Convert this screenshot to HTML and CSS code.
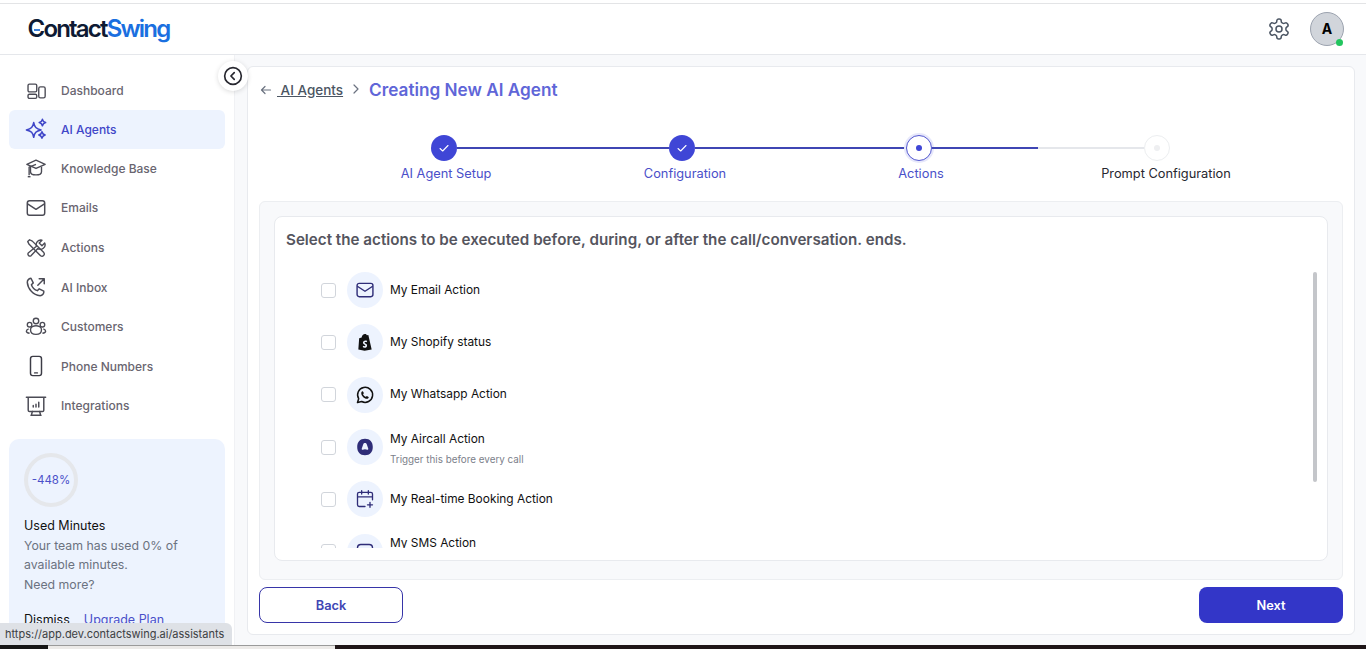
FILE: index.html
```html
<!DOCTYPE html>
<html lang="en">
<head>
<meta charset="utf-8">
<title>ContactSwing</title>
<link rel="stylesheet" href="styles.css">
</head>
<body>
<div class="app">
  <header class="topbar">
    <div class="logo"><span class="logo-dark">Contact</span><span class="logo-blue">Swing</span><i class="logo-dash"></i></div>
    <div class="top-actions">
      <svg class="gear" viewBox="0 0 24 24" fill="none" stroke="#4b5563" stroke-width="1.5" stroke-linejoin="round"><path d="M12.220 2h-.44a2 2 0 0 0-2 2v.18a2 2 0 0 1-1 1.730l-.43.25a2 2 0 0 1-2 0l-.15-.08a2 2 0 0 0-2.730.73l-.22.38a2 2 0 0 0 .73 2.730l.15.1a2 2 0 0 1 1 1.720v.51a2 2 0 0 1-1 1.740l-.15.09a2 2 0 0 0-.73 2.730l.22.38a2 2 0 0 0 2.730.73l.15-.08a2 2 0 0 1 2 0l.43.25a2 2 0 0 1 1 1.730V20a2 2 0 0 0 2 2h.44a2 2 0 0 0 2-2v-.18a2 2 0 0 1 1-1.730l.43-.25a2 2 0 0 1 2 0l.15.08a2 2 0 0 0 2.730-.73l.22-.39a2 2 0 0 0-.73-2.730l-.15-.08a2 2 0 0 1-1-1.740v-.5a2 2 0 0 1 1-1.740l.15-.09a2 2 0 0 0 .73-2.730l-.22-.38a2 2 0 0 0-2.730-.73l-.15.08a2 2 0 0 1-2 0l-.43-.25a2 2 0 0 1-1-1.730V4a2 2 0 0 0-2-2z"/><circle cx="12" cy="12" r="3"/></svg>
      <div class="avatar">A<i class="online"></i></div>
    </div>
  </header>
  <div class="main">
    <aside class="sidebar">
      <nav class="nav">
        <a class="nav-item first"><svg viewBox="0 0 24 24" fill="none" stroke="#4b4b55" stroke-width="1.5"><rect x="3.300" y="4.500" width="9.500" height="8.500" rx="1.500"/><rect x="3.300" y="15.500" width="9.500" height="4.500" rx="1.500"/><rect x="15" y="7.500" width="7" height="12" rx="1.800"/></svg>Dashboard</a>
        <a class="nav-item active"><svg viewBox="0 0 24 24" fill="none" stroke="#3f46c8" stroke-width="1.700" stroke-linejoin="round"><path d="M9.500 5c1 5 2.500 6.800 8 8-5.500 1.200-7 3-8 8-1-5-2.500-6.800-8-8 5.500-1.200 7-3 8-8z"/><path d="M19 1.500c.5 2.300 1.200 3 3.500 3.500-2.300.5-3 1.200-3.500 3.500-.5-2.300-1.200-3-3.500-3.500 2.300-.5 3-1.200 3.500-3.500zM18.500 15c.5 2.300 1.200 3 3.500 3.500-2.300.5-3 1.200-3.500 3.500-.5-2.300-1.200-3-3.500-3.500 2.300-.5 3-1.200 3.500-3.500z"/></svg>AI Agents</a>
        <a class="nav-item"><svg viewBox="0 0 24 24" fill="none" stroke="#4b4b55" stroke-width="1.5" stroke-linejoin="round"><path d="M12 3.500 22 8l-10 4.500L2 8z"/><path d="M6 10.500V16c0 2 2.500 3.500 6 3.500s6-1.500 6-3.500v-5.500"/><path d="M12 8 4.500 11v9"/><path d="M3 21.500h3"/></svg>Knowledge Base</a>
        <a class="nav-item"><svg viewBox="0 0 24 24" fill="none" stroke="#4b4b55" stroke-width="1.600" stroke-linejoin="round"><rect x="2.500" y="4" width="19" height="16" rx="2.500"/><path d="m2.800 7.500 9.200 6 9.200-6"/></svg>Emails</a>
        <a class="nav-item"><svg viewBox="0 0 24 24" fill="none" stroke="#4b4b55" stroke-width="1.500" stroke-linejoin="round"><path d="m3 5 2-2 3 1.500L20.500 17a2.500 2.500 0 0 1-3.500 3.500L4.500 8z"/><path d="M21.500 6.500 18.500 9.500 15.500 6.500l3-3a5 5 0 0 0-6 6.500L3.500 17.500a2.200 2.200 0 0 0 3 3l7.500-8a5 5 0 0 0 7.500-6z"/></svg>Actions</a>
        <a class="nav-item"><svg viewBox="0 0 24 24" fill="none" stroke="#4b4b55" stroke-width="1.600" stroke-linecap="round" stroke-linejoin="round"><path d="M6.500 2.500 9 7.500 7 9.500c1 3 3.500 5.500 6.500 6.500l2-2 5 2.500c.5 2.500-1.500 5-4 5C9 21 3 14 2.500 7c0-2.500 1.500-4 4-4.500z"/><path d="m14 10 7-7M15.500 3H21v5.500"/></svg>AI Inbox</a>
        <a class="nav-item"><svg viewBox="0 0 24 24" fill="none" stroke="#4b4b55" stroke-width="1.500"><circle cx="12" cy="5.500" r="3"/><circle cx="5" cy="9.500" r="2.500"/><circle cx="19" cy="9.500" r="2.500"/><path d="M8 11.500c-1.500.8-2 2-2 3.500 0 3 2.500 5 6 5s6-2 6-5c0-1.500-.5-2.700-2-3.500-2.500-1-5.500-1-8 0z"/><path d="M4 14c-1.500.5-2.500 1.500-2.500 2.500 0 1 1.500 2 3.500 2.300M20 14c1.500.5 2.500 1.500 2.500 2.500 0 1-1.500 2-3.500 2.300"/></svg>Customers</a>
        <a class="nav-item"><svg viewBox="0 0 24 24" fill="none" stroke="#3c3c46" stroke-width="1.600" stroke-linecap="round"><rect x="6" y="1.500" width="12" height="21" rx="2.500"/><path d="M10.500 19.500h3"/></svg>Phone Numbers</a>
        <a class="nav-item"><svg viewBox="0 0 24 24" fill="none" stroke="#4b4b55" stroke-width="1.600" stroke-linecap="round" stroke-linejoin="round"><path d="M1.500 2.500h21M3.500 2.500v14a1.500 1.500 0 0 0 1.500 1.500h14a1.500 1.500 0 0 0 1.500-1.500v-14"/><path d="M8 18l-1 4M16 18l1 4M6.500 22h11M9 13v-1.500M12 13v-3M15 13V8"/></svg>Integrations</a>
      </nav>
      <section class="usage">
        <div class="ring">-448%</div>
        <h3 class="usage-title">Used Minutes</h3>
        <p class="usage-text">Your team has used 0% of available minutes.<br>Need more?</p>
        <div class="usage-links"><span>Dismiss</span><a>Upgrade Plan</a></div>
      </section>
    </aside>
    <button class="collapse"><svg viewBox="0 0 24 24" fill="none" stroke="#27272f" stroke-width="2" stroke-linecap="round" stroke-linejoin="round"><circle cx="12" cy="12" r="10"/><path d="m13.500 8-4 4 4 4"/></svg></button>
    <main class="content">
      <div class="card">
        <div class="crumbs">
          <svg class="back-arrow" viewBox="0 0 12 12" fill="none" stroke="#6b7280" stroke-width="1.200" stroke-linecap="round" stroke-linejoin="round"><path d="M10.500 6h-9M5 2.500 1.500 6 5 9.500"/></svg>
          <a class="crumb-link">&nbsp;AI Agents</a>
          <svg class="crumb-sep" viewBox="0 0 10 12" fill="none" stroke="#6b7280" stroke-width="1.200" stroke-linecap="round" stroke-linejoin="round"><path d="m3 2 4 4-4 4"/></svg>
          <h1 class="crumb-title">Creating New AI Agent</h1>
        </div>
        <div class="stepper">
          <div class="track">
            <span class="dot done"><svg viewBox="0 0 12 12" fill="none" stroke="#fff" stroke-width="1.100" stroke-linecap="round" stroke-linejoin="round"><path d="m2 6.500 2.700 2.500L10 3.500"/></svg></span>
            <span class="seg"></span>
            <span class="dot done"><svg viewBox="0 0 12 12" fill="none" stroke="#fff" stroke-width="1.100" stroke-linecap="round" stroke-linejoin="round"><path d="m2 6.500 2.700 2.500L10 3.500"/></svg></span>
            <span class="seg"></span>
            <span class="dot current"><i></i></span>
            <span class="seg half"></span>
            <span class="dot todo"><i></i></span>
          </div>
          <div class="step-labels">
            <span class="label s1">AI Agent Setup</span>
            <span class="label s2">Configuration</span>
            <span class="label s3">Actions</span>
            <span class="label s4">Prompt Configuration</span>
          </div>
        </div>
        <div class="panel">
          <div class="list-box">
            <h2 class="list-head">Select the actions to be executed before, during, or after the call/conversation. ends.</h2>
            <div class="list">
              <label class="row"><span class="check"></span><span class="ico"><svg viewBox="0 0 24 24" fill="none" stroke="#2f2d78" stroke-width="1.700" stroke-linejoin="round"><rect x="2.500" y="4" width="19" height="16" rx="2.500"/><path d="m2.800 7.500 9.200 6 9.200-6"/></svg></span><span class="txt"><b>My Email Action</b></span></label>
              <label class="row"><span class="check"></span><span class="ico"><svg viewBox="0 0 24 24"><path fill="#111" fill-rule="evenodd" d="M5 7.500 8 6.500C8.300 4 10 2.500 12 2.500c1.200 0 1.800.7 2.200 1.500L16 3.700 20 21l-8.500 1.500L4 21zM14.600 10.800c-.6-.3-1.300-.5-2-.5-2 0-3.100 1.300-3.100 2.700 0 2 3 2.200 3 3.300 0 .5-.4.800-1 .8-.8 0-1.700-.5-1.700-.5l-.5 1.500c.4.500 1.300.8 2.200.8 1.800 0 3-1.100 3-2.800 0-2.300-3-2.500-3-3.300 0-.3.200-.7 1-.7.600 0 1.200.2 1.500.3z"/></svg></span><span class="txt"><b>My Shopify status</b></span></label>
              <label class="row"><span class="check"></span><span class="ico"><svg viewBox="0 0 24 24" fill="none" stroke="#111" stroke-width="1.800" stroke-linejoin="round"><path d="M3 21l1.400-4.600A9 9 0 1 1 8 19.800z"/><path fill="#111" stroke="none" d="M9 7.500c-.5 0-1.500.8-1.500 2.300 0 3 3.500 6.700 6.700 6.700 1.500 0 2.300-1 2.300-1.900 0-.4-2-1.500-2.400-1.500-.4 0-.8 1-1.200 1-1 0-3.200-2.200-3.200-3.100 0-.4.900-.8.900-1.200 0-.4-1-2.300-1.600-2.300z"/></svg></span><span class="txt"><b>My Whatsapp Action</b></span></label>
              <label class="row"><span class="check"></span><span class="ico"><svg class="big" viewBox="0 0 24 24"><path fill="#2f2d78" fill-rule="evenodd" d="M12 3c5.500 0 8.500 3.500 8.500 9s-3 9-8.500 9-8.500-3.500-8.500-9S6.500 3 12 3zM12 7.500c-1 0-1.500.5-2 1.700l-1.500 4.300c-.3 1 .3 1.800 1.200 1.500.7-.3 1.300-.5 2.300-.5s1.600.2 2.300.5c.9.3 1.500-.5 1.200-1.500L14 9.200c-.5-1.200-1-1.700-2-1.700z"/></svg></span><span class="txt two"><b>My Aircall Action</b><small>Trigger this before every call</small></span></label>
              <label class="row"><span class="check"></span><span class="ico"><svg viewBox="0 0 24 24" fill="none" stroke="#2f2d78" stroke-width="1.600" stroke-linecap="round" stroke-linejoin="round"><path d="M12 21H5a2 2 0 0 1-2-2V6a2 2 0 0 1 2-2h14a2 2 0 0 1 2 2v7M3 9.500h18M8 2v4M16 2v4M18 16v6M15 19h6"/></svg></span><span class="txt"><b>My Real-time Booking Action</b></span></label>
              <label class="row"><span class="check"></span><span class="ico"><svg viewBox="0 0 24 24" fill="none" stroke="#2f2d78" stroke-width="1.700" stroke-linejoin="round"><rect x="3" y="3" width="18" height="16" rx="4"/></svg></span><span class="txt two"><b>My SMS Action</b><small>&nbsp;</small></span></label>
            </div>
            <span class="thumb"></span>
          </div>
        </div>
        <div class="buttons">
          <button class="btn btn-back">Back</button>
          <button class="btn btn-next">Next</button>
        </div>
      </div>
    </main>
  </div>
  <div class="desk"><span class="d1"></span><span class="d2"></span><span class="d3"></span></div>
</div>
<div class="status">https://app.dev.contactswing.ai/assistants</div>
</body>
</html>
```
FILE: styles.css
```css
* { box-sizing: border-box; }
html, body { margin: 0; height: 100%; overflow: hidden; }
body { font-family: Inter, "Noto Sans", sans-serif; color: #111827; background: #fff; }
.app { height: 649px; display: flex; flex-direction: column; padding-top: 3px; }
.topbar { flex: 0 0 52px; display: flex; justify-content: space-between; align-items: center; padding: 0 22px 0 27.500px; border-top: 1px solid #e3e4e6; border-bottom: 1px solid #e5e7eb; background: #fff; }
.logo { position: relative; font-size: 24px; font-weight: 600; letter-spacing: -1.800px; line-height: 30px; }
.logo-dark { color: #0e1a33; }
.logo-blue { color: #1a6fe0; }
.logo-dash { position: absolute; left: 6px; top: 14.500px; width: 6px; height: 2px; background: #3c7fd8; }
.top-actions { display: flex; align-items: center; gap: 19px; }
.gear { width: 24px; height: 24px; }
.avatar { position: relative; width: 34px; height: 34px; border-radius: 50%; background: #d1d5db; border: 1px solid #9ca3af; display: flex; align-items: center; justify-content: center; font-size: 14px; font-weight: 700; color: #000; margin-top: -1px; }
.online { position: absolute; right: .5px; bottom: -1px; width: 7px; height: 7px; border-radius: 50%; background: #22c55e; }
.main { flex: 1; min-height: 0; display: flex; position: relative; background: #f8f9fb; }
.sidebar { flex: 0 0 235px; background: #fff; padding: 16.400px 9px 0 9px; overflow: hidden; border-right: 1px solid #f0f1f4; }
.nav { display: flex; flex-direction: column; gap: 0; }
.nav-item { display: flex; align-items: center; gap: 14.500px; height: 39.600px; flex: none; padding-left: 15.500px; font-size: 12px; font-weight: 500; color: #696570; border-radius: 6px; }
.nav-item.first, .nav-item.active { height: 38.600px; }
.nav-item svg { width: 22px; height: 22px; flex: none; }
.nav-item.active { background: #edf3fe; color: #3f46c8; }
.usage { margin-top: 13.100px; height: 230px; background: #edf3fe; border-radius: 10px; padding: 14px 15px; }
.ring { width: 54px; height: 54px; border-radius: 50%; border: 4px solid #e5e7eb; display: flex; align-items: center; justify-content: center; font-size: 11.500px; color: #4a4fc9; }
.usage-title { margin: 9px 0 0; font-size: 12.500px; line-height: 20px; font-weight: 400; color: #111; }
.usage-text { margin: 0; font-size: 12.300px; line-height: 19.600px; color: #6b7280; }
.usage-links { margin-top: 15px; display: flex; gap: 14px; font-size: 12.500px; line-height: 20px; color: #111; }
.usage-links a { color: #4a4fc9; }
.collapse { position: absolute; left: 218px; top: 6px; z-index: 3; width: 30px; height: 30px; border-radius: 50%; border: 0; padding: 5px; background: #fff; box-shadow: 0 1px 5px rgba(0,0,0,.14); }
.collapse svg { display: block; width: 20px; height: 20px; }
.content { flex: 1; min-width: 0; padding: 11px 11px 10px 12px; }
.card { height: 569px; background: #fff; border: 1px solid #e8eaee; border-radius: 6px; padding: 0 11px; display: flex; flex-direction: column; }
.crumbs { display: flex; align-items: center; height: 44px; padding-top: 1px; flex: none; }
.back-arrow { width: 12px; height: 12px; margin: 0 5px 0 1px; }
.crumb-link { font-size: 13.500px; font-weight: 500; color: #4b5563; text-decoration: underline; }
.crumb-sep { width: 10px; height: 12px; margin: -2px 8px 0 8px; }
.crumb-title { margin: 0; font-size: 17.200px; font-weight: 600; color: #5f66d8; }
.stepper { height: 90px; padding-top: 23px; flex: none; }
.track { display: flex; align-items: center; height: 28px; padding-left: 172px; width: 911px; }
.seg { flex: 1; height: 2px; background: #3f46b4; }
.seg.half { background: linear-gradient(90deg, #3f46b4 0 50%, #e5e7eb 50%); }
.dot { flex: none; width: 26px; height: 26px; border-radius: 50%; display: flex; align-items: center; justify-content: center; }
.dot.done { background: #3f46d6; }
.dot.done svg { width: 12px; height: 12px; }
.dot.current { background: #fff; border: 1px solid #5257cf; box-shadow: 0 0 0 2px #e7e8fb; }
.dot.current i { width: 6px; height: 6px; border-radius: 50%; background: #3f46d6; }
.dot.todo { background: #fff; border: 1px solid #eceef0; }
.dot.todo i { width: 6px; height: 6px; border-radius: 50%; background: #eeeff1; }
.step-labels { display: flex; margin-top: 2px; font-size: 12.800px; line-height: 20px; }
.label { color: #4a4fc9; text-align: center; flex: none; }
.s1 { width: 120px; margin-left: 127px; }
.s2 { width: 120px; margin-left: 119px; }
.s3 { width: 120px; margin-left: 116px; }
.s4 { width: 180px; margin-left: 95px; color: #27272f; }
.panel { height: 379px; flex: none; background: #f8f9fb; border: 1px solid #eceef1; border-radius: 6px; padding: 14px 14px 18px; }
.list-box { position: relative; height: 345px; background: #fff; border: 1px solid #e8eaee; border-radius: 8px; padding-left: 11px; }
.list-head { margin: 0; height: 44px; display: flex; align-items: center; font-size: 15.200px; font-weight: 600; color: #55555e; }
.list { height: 287px; overflow: hidden; padding: 3px 0 0 35px; }
.row { display: flex; align-items: center; height: 52.300px; }
.check { width: 15px; height: 15px; border: 1px solid #d1d5db; border-radius: 3px; background: #fff; margin-right: 11px; flex: none; }
.ico { width: 36px; height: 36px; border-radius: 50%; background: #edf3fe; display: flex; align-items: center; justify-content: center; margin-right: 7px; flex: none; }
.ico svg { width: 20px; height: 20px; }
.ico svg.big { width: 22px; height: 22px; }
.txt { display: flex; flex-direction: column; margin-top: -1px; }
.txt.two { margin-top: 1px; }
.txt b { font-size: 11.900px; line-height: 18px; font-weight: 400; color: #111; }
.txt small { font-size: 9.850px; line-height: 14px; margin-top: 4px; color: #7b808a; }
.thumb { position: absolute; right: 10px; top: 55px; width: 4px; height: 210px; border-radius: 2px; background: #c4c6ca; }
.buttons { display: flex; justify-content: space-between; margin-top: 7px; }
.btn { width: 144px; height: 36px; border-radius: 8px; font-family: inherit; font-size: 12.800px; font-weight: 600; }
.btn-back { background: #fff; border: 1px solid #3735a8; color: #3f46b4; }
.btn-next { background: #3336c8; border: 0; color: #fff; }
.desk { flex: 0 0 4px; display: flex; }
.d1 { width: 48px; background: #161616; }
.d2 { width: 287px; background: #eceae8; border-top: 1px solid #9a9a9a; }
.d3 { flex: 1; background: #1f1618; }
.status { position: fixed; left: 0; bottom: 4px; width: 232px; height: 22px; padding-left: 5px; background: #dee1e6; border-top-right-radius: 6px; font-size: 11px; line-height: 22px; color: #3c4043; z-index: 5; white-space: nowrap; }
```
